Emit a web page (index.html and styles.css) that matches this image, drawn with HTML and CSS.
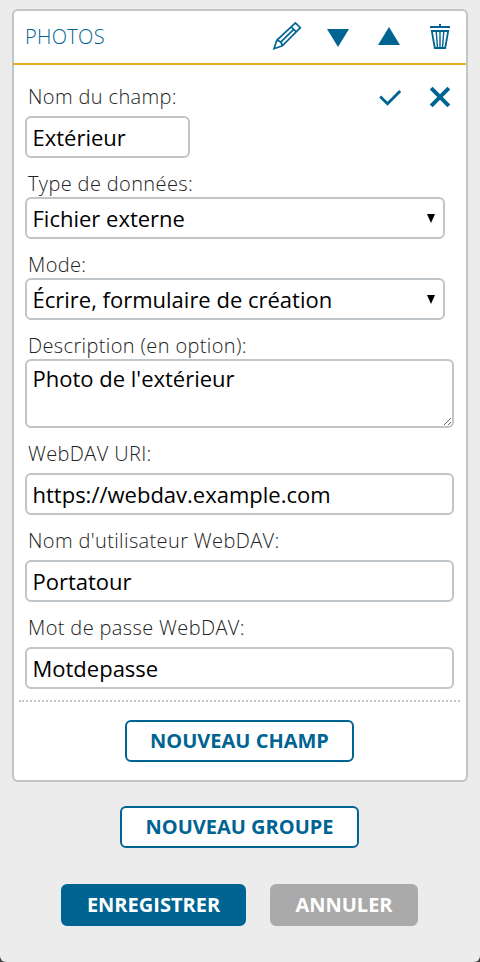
FILE: index.html
```html
<!DOCTYPE html>
<html lang="fr">
<head>
<meta charset="utf-8">
<title>Photos</title>
<link rel="stylesheet" href="styles.css">
</head>
<body>
<main class="panel">
  <section class="card">
    <header class="card-header">
      <h2 class="card-title">PHOTOS</h2>
      <div class="icons">
        <svg class="icon" width="32" height="32" viewBox="0 0 32 32"><path d="M3 28.7 5.8 20.3 24.4 3 29.3 7.7 11.4 25.8ZM5.8 20.3Q10.8 21 11.4 25.8M20.2 6.8 25.2 11.8M9.7 22.2 22.7 9.4" fill="none" stroke="currentColor" stroke-width="1.7"/></svg>
        <svg class="icon" width="32" height="32" viewBox="0 0 32 32"><path d="M5 9H27L16 27Z" fill="currentColor"/></svg>
        <svg class="icon" width="32" height="32" viewBox="0 0 32 32"><path d="M5 25H27L16 7Z" fill="currentColor"/></svg>
        <svg class="icon" width="32" height="32" viewBox="0 0 32 32"><path d="M6 7H26M16 4V7" fill="none" stroke="currentColor" stroke-width="2"/><path d="M7.8 11H24.2L21.2 28H10.8Z" fill="none" stroke="currentColor" stroke-width="1.8"/><path d="M12.2 11 13.5 28M16 11V28M19.8 11 18.5 28" fill="none" stroke="currentColor" stroke-width="1.4"/></svg>
      </div>
    </header>
    <form class="fields">
      <div class="field-head">
        <label class="label" for="name">Nom du champ:</label>
        <div class="icons">
          <svg class="icon" width="32" height="32" viewBox="0 0 32 32"><path d="M6.2 15.5 13.5 22.7 26.2 10" fill="none" stroke="currentColor" stroke-width="2.8"/></svg>
          <svg class="icon" width="32" height="32" viewBox="0 0 32 32"><path d="M7.2 7.2 24.8 24.8M24.8 7.2 7.2 24.8" fill="none" stroke="currentColor" stroke-width="4"/></svg>
        </div>
      </div>
      <input class="control short" id="name" type="text" value="Extérieur">
      <label class="label near" for="type">Type de données:</label>
      <div class="select-wrap"><select class="control" id="type"><option>Fichier externe</option></select><span class="arrow"></span></div>
      <label class="label near" for="mode">Mode:</label>
      <div class="select-wrap"><select class="control" id="mode"><option>Écrire, formulaire de création</option></select><span class="arrow"></span></div>
      <label class="label near" for="desc">Description (en option):</label>
      <textarea class="control area" id="desc">Photo de l'extérieur</textarea>
      <label class="label" for="uri">WebDAV URI:</label>
      <input class="control" id="uri" type="text" value="https://webdav.example.com">
      <label class="label" for="user">Nom d'utilisateur WebDAV:</label>
      <input class="control" id="user" type="text" value="Portatour">
      <label class="label" for="pass">Mot de passe WebDAV:</label>
      <input class="control" id="pass" type="text" value="Motdepasse">
    </form>
    <div class="card-footer"><button class="button outline new-field">NOUVEAU CHAMP</button></div>
  </section>
  <button class="button outline new-group">NOUVEAU GROUPE</button>
  <div class="actions">
    <button class="button save">ENREGISTRER</button>
    <button class="button cancel">ANNULER</button>
  </div>
</main>
</body>
</html>
```
FILE: styles.css
```css
* { box-sizing: border-box; }
html { background: #444; }
body { margin: 0; font-family: "Open Sans", sans-serif; }
.panel {
  height: 962px;
  padding: 9px 12px 0;
  background: #ececec;
  border-radius: 0 0 6px 6px;
  display: flex;
  flex-direction: column;
  align-items: center;
}
.card {
  width: 456px;
  height: 773px;
  background: #fff;
  border: 2px solid #bfc5c9;
  border-radius: 6px;
}
.card-header {
  height: 54px;
  margin: 0 0 0 -1px;
  padding: 0 10px 2px 12px;
  display: flex;
  align-items: center;
  justify-content: space-between;
  border-bottom: 2px solid #e4ae20;
}
.card-title { margin: 0; font-size: 20px; font-weight: 300; letter-spacing: 0.3px; color: #006492; }
.icons { display: flex; gap: 19px; color: #006492; }
.icon { display: block; }
.fields {
  height: 637px;
  margin: 0 6px 0 5px;
  padding: 18px 5px 0 6px;
  display: flex;
  flex-direction: column;
  border-bottom: 2px dotted #bfc5c9;
}
.field-head { display: flex; justify-content: space-between; height: 33px; margin-right: -1px; }
.field-head .icons { margin-top: -2px; gap: 18px; }
.label {
  flex: none;
  height: 33px;
  padding-left: 3px;
  font-size: 20px;
  font-weight: 300;
  letter-spacing: 0.37px;
  line-height: 27px;
  color: #222;
}
.near { height: 27px; }
.control {
  display: block;
  flex: none;
  width: 429px;
  height: 42px;
  margin: 0 0 12px;
  padding: 0 6px 0 5.5px;
  border: 2px solid #bfc5c9;
  border-radius: 6px;
  background: #fff;
  color: #000;
  font: 22px "Open Sans", sans-serif;
  outline: none;
}
.short { width: 165px; }
.select-wrap { position: relative; width: 420px; height: 54px; }
select.control { width: 420px; appearance: none; }
.arrow {
  position: absolute;
  right: 10.5px;
  top: 17px;
  border: solid transparent;
  border-width: 9px 4.5px 0;
  border-top-color: #000;
}
.area { height: 69px; line-height: 30px; padding-top: 2px; resize: both; overflow: hidden; }
.card-footer { padding-top: 18px; text-align: center; }
.button {
  height: 42px;
  padding: 0 0 2px;
  border: 2px solid #006492;
  border-radius: 6px;
  font: bold 20px "Open Sans", sans-serif;
}
.outline { background: #fff; color: #006492; }
.new-field { width: 229px; margin-right: 1px; }
.new-group { width: 239px; margin: 24px 1px 0 0; }
.actions { display: flex; gap: 24px; margin: 36px 1px 0 0; }
.save { width: 185px; background: #006492; color: #fff; }
.cancel { width: 148px; background: #aaa; border-color: #aaa; color: #fff; }
```
